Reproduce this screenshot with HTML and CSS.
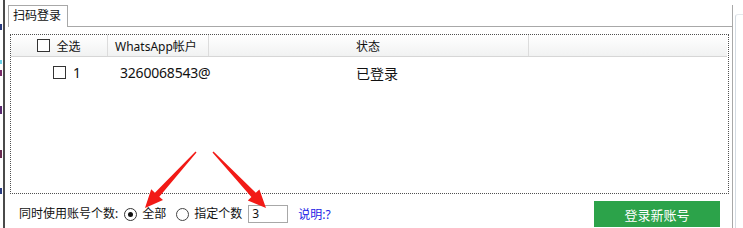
FILE: index.html
```html
<!DOCTYPE html>
<html lang="zh-CN">
<head>
<meta charset="utf-8">
<title>扫码登录</title>
<link rel="stylesheet" href="styles.css">
</head>
<body>
<div class="edge">
  <span class="frag f1"></span>
  <span class="frag f2"></span>
  <span class="frag f3"></span>
  <span class="frag f4"></span>
  <span class="frag f5"></span>
  <span class="frag f6"></span>
</div>
<div class="rule"></div>
<div class="main">
  <div class="tabs">
    <div class="tab-gap"></div>
    <div class="tab">扫码登录</div>
    <div class="tab-fill"></div>
  </div>
  <div class="panel">
    <div class="list">
      <div class="head">
        <div class="c c1 center"><span class="cb"></span><span class="lbl">全选</span></div>
        <div class="c c2">WhatsApp帐户</div>
        <div class="c c3">状态</div>
        <div class="c c4 last"></div>
      </div>
      <div class="row">
        <div class="c c1 first"><span class="cb"></span><span class="num">1</span></div>
        <div class="c c2 acct"><span class="clip">3260068543@</span></div>
        <div class="c c3 status">已登录</div>
        <div class="c c4"></div>
      </div>
    </div>
    <div class="footer">
      <span class="txt">同时使用账号个数:</span>
      <span class="radio on"></span>
      <span class="txt">全部</span>
      <span class="radio r2"></span>
      <span class="txt">指定个数</span>
      <span class="input">3</span>
      <span class="help">说明:?</span>
      <span class="btn">登录新账号</span>
    </div>
  </div>
</div>
<div class="side"></div>
<svg class="arrows" width="743" height="228" viewBox="0 0 743 228">
  <polygon fill="#f21a16" points="195.5,151.5 154.9,192.7 151.2,189.3 145,208 163,200.1 159.3,196.7 196.5,152.5"/>
  <polygon fill="#f21a16" points="213.5,151.5 255.8,192.8 259.4,189.4 266,208 247.8,200.4 251.4,197 212.5,152.5"/>
</svg>
</body>
</html>
```
FILE: styles.css
```css
html, body {
  margin: 0;
  padding: 0;
}
body {
  width: 743px;
  height: 228px;
  overflow: hidden;
  background: #ffffff;
  display: flex;
  font-family: "Noto Sans", "Noto Sans CJK SC", sans-serif;
  font-size: 12px;
  color: #111;
  position: relative;
}
.edge {
  width: 3px;
  display: flex;
  flex-direction: column;
}
.frag {
  display: block;
  width: 2px;
  height: 6px;
  background: #3a4a8a;
}
.f1 { margin-top: 24px; background: #2a3c80; }
.f2 { margin-top: 30px; background: #6ad0e8; height: 4px; }
.f3 { margin-top: 6px; background: #7a2a6a; }
.f4 { margin-top: 30px; background: #5a2a70; height: 8px; }
.f5 { margin-top: 36px; background: #6a2a50; height: 8px; }
.f6 { margin-top: 30px; background: #2a3c80; }
.rule {
  width: 2px;
  background: #4a4a4a;
}
.main {
  width: 728px;
  display: flex;
  flex-direction: column;
}
.tabs {
  display: flex;
  height: 27px;
  padding-top: 5px;
  box-sizing: border-box;
}
.tab-gap {
  width: 3px;
}
.tab {
  width: 60px;
  box-sizing: border-box;
  height: 22px;
  border: 1px solid #a8a8a8;
  border-bottom: none;
  background: #fff;
  padding-left: 4px;
  line-height: 20px;
  color: #111;
}
.tab-fill {
  flex: 1;
  border-bottom: 1px solid #a8a8a8;
  border-right: 1px solid #a8a8a8;
}
.panel {
  flex: 1;
  border-right: 1px solid #a8a8a8;
  padding: 7px 3px 0 5px;
  display: flex;
  flex-direction: column;
}
.list {
  height: 160px;
  box-sizing: border-box;
  border: 1px dotted #505050;
  display: flex;
  flex-direction: column;
}
.head {
  display: flex;
  height: 22px;
  box-sizing: border-box;
  border-bottom: 1px solid #d6d6d6;
  background: linear-gradient(#ffffff, #f1f2f2);
  margin-right: 1px;
}
.c {
  display: flex;
  align-items: center;
  box-sizing: border-box;
  white-space: nowrap;
}
.head .c {
  border-right: 1px solid #dcdcdc;
  height: 21px;
}
.head .c.last {
  border-right: none;
}
.c1 { width: 97px; }
.c2 { width: 101px; padding-left: 7px; }
.c3 { width: 320px; padding-left: 147px; }
.c4 { flex: 1; }
.center { justify-content: center; }
.cb {
  display: inline-block;
  width: 13px;
  height: 13px;
  box-sizing: border-box;
  border: 1px solid #333;
  background: #fff;
}
.lbl {
  margin-left: 6px;
}
.row {
  display: flex;
  height: 30px;
}
.row .c {
  font-size: 14px;
  padding-top: 1px;
}
.first {
  padding-left: 42px;
}
.num {
  margin-left: 7px;
  font-size: 14px;
}
.acct {
  padding-left: 12px;
}
.clip {
  font-size: 14px;
  letter-spacing: -0.2px;
}
.status {
  font-size: 14px;
}
.footer {
  height: 26px;
  margin-top: 7px;
  display: flex;
  align-items: center;
  padding-left: 9px;
  padding-right: 9px;
}
.txt {
  line-height: 16px;
}
.radio {
  display: inline-block;
  width: 13px;
  height: 13px;
  box-sizing: border-box;
  border: 1px solid #333;
  border-radius: 50%;
  background: #fff;
  margin-left: 6px;
  margin-right: 5px;
  position: relative;
}
.radio.r2 {
  margin-left: 10px;
  border-color: #444;
}
.radio.on::after {
  content: "";
  position: absolute;
  left: 3px;
  top: 3px;
  width: 5px;
  height: 5px;
  border-radius: 50%;
  background: #111;
}
.input {
  display: inline-block;
  width: 40px;
  height: 18px;
  box-sizing: border-box;
  border: 1px solid #a8a8a8;
  margin-left: 6px;
  padding-left: 3px;
  line-height: 16px;
  font-size: 12px;
}
.help {
  margin-left: 10px;
  color: #1a1ae6;
}
.btn {
  margin-left: auto;
  width: 126px;
  height: 26px;
  background: #2ca34a;
  color: #fff;
  display: flex;
  align-items: center;
  justify-content: center;
  font-size: 13px;
}
.side {
  flex: 1;
  margin-top: 14px;
  margin-left: 2px;
  border-left: 1px solid #d4dbe2;
  border-top: 1px solid #e4e8ec;
  border-top-left-radius: 3px;
}
.arrows {
  position: absolute;
  left: 0;
  top: 0;
  pointer-events: none;
}
```
